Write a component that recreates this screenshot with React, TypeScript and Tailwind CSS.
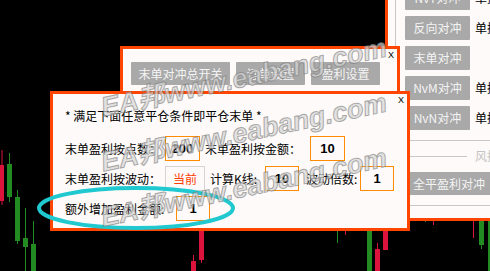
import type { ReactNode } from 'react'

type Candle = {
  x: number
  w: number
  top: number
  bottom: number
  wickTop?: number
  wickBottom?: number
  up: boolean
}

const UP = '#228b22'
const DOWN = '#dc143c'

// visible part of the price chart behind the EA windows
const CANDLES: Candle[] = [
  { x: 0, w: 4, top: 165, bottom: 201, wickTop: 150, wickBottom: 205, up: false },
  { x: 7, w: 5, top: 164, bottom: 197, wickTop: 153, wickBottom: 202, up: true },
  { x: 15, w: 5, top: 197, bottom: 241, wickTop: 190, wickBottom: 244, up: true },
  { x: 23, w: 5, top: 238, bottom: 247, wickTop: 208, wickBottom: 271, up: true },
  { x: 31, w: 5, top: 244, bottom: 271, wickTop: 221, wickBottom: 271, up: true },
  { x: 191, w: 5, top: 261, bottom: 271, wickTop: 255, wickBottom: 271, up: false },
  { x: 199, w: 5, top: 225, bottom: 260, wickBottom: 263, up: false },
  { x: 337, w: 0, top: 225, bottom: 243, up: true },
  { x: 345, w: 0, top: 225, bottom: 235, up: false },
  { x: 367, w: 5, top: 225, bottom: 271, up: true },
  { x: 375, w: 5, top: 249, bottom: 271, wickTop: 243, wickBottom: 271, up: false },
  { x: 383, w: 5, top: 225, bottom: 250, up: false },
  { x: 425, w: 0, top: 218, bottom: 222, up: true },
  { x: 433, w: 0, top: 218, bottom: 225, up: false },
  { x: 473, w: 0, top: 218, bottom: 238, up: false },
  { x: 479, w: 5, top: 218, bottom: 245, wickBottom: 249, up: true },
  { x: 488, w: 5, top: 218, bottom: 271, up: true },
]

function Chart() {
  return (
    <svg className="absolute left-0 top-0" width={490} height={271} viewBox="0 0 490 271">
      {CANDLES.map((c, i) => {
        const color = c.up ? UP : DOWN
        const mid = c.w ? c.x + c.w / 2 : c.x + 0.5
        return (
          <g key={i}>
            {(c.wickTop !== undefined || c.wickBottom !== undefined || c.w === 0) && (
              <line
                x1={mid}
                x2={mid}
                y1={c.wickTop ?? c.top}
                y2={c.wickBottom ?? c.bottom}
                stroke={color}
                strokeWidth={1}
              />
            )}
            {c.w > 0 && <rect x={c.x} y={c.top} width={c.w} height={c.bottom - c.top} fill={color} />}
          </g>
        )
      })}
    </svg>
  )
}

function GrayButton({ className, children }: { className: string; children: ReactNode }) {
  return (
    <div
      className={`flex shrink-0 items-center justify-center rounded-[1px] bg-[#a9a9a9] text-[12px] text-[#f4f4f4] ${className}`}
    >
      {children}
    </div>
  )
}

function CloseX() {
  return (
    <span className="absolute right-[3px] top-[1px] font-['Liberation_Sans',sans-serif] text-[9px] leading-[10px] text-black">
      X
    </span>
  )
}

function RightPanel() {
  const rows = [
    { label: 'NvT对冲', side: '单控' },
    { label: '反向对冲', side: '单控' },
    { label: '末单对冲', side: '' },
    { label: 'NvM对冲', side: '单控' },
    { label: 'NvN对冲', side: '单控' },
  ]
  return (
    <div className="absolute left-[385px] top-[-20px] flex h-[241px] w-[140px] border-[3px] border-[#ff4500] bg-[#fdfaf9]">
      <div className="w-[8px] shrink-0 border-r border-[#c8c8c8]" />
      <div className="flex flex-1 flex-col pl-[9px] pt-[3px]">
        <div className="flex flex-col gap-[6px]">
          {rows.map((r) => (
            <div key={r.label} className="flex h-[24px] items-center">
              <GrayButton className="h-full w-[65px]">{r.label}</GrayButton>
              <span className="ml-[5px] whitespace-nowrap text-black">{r.side}</span>
            </div>
          ))}
        </div>
        <div className="mt-[10px] border-t border-[#c8c8c8]" />
        <div className="mt-[8px] flex h-[14px] items-center">
          <div className="w-[62px] border-t border-[#c8c8c8]" />
          <span className="ml-[8px] whitespace-nowrap text-[#c4c4c4]">风控设置</span>
        </div>
        <GrayButton className="mt-[9px] h-[23px] w-[88px]">全平盈利对冲</GrayButton>
        <div className="mt-[10px] border-t border-[#c8c8c8]" />
      </div>
    </div>
  )
}

function SwitchDialog() {
  return (
    <div className="absolute left-[120px] top-[46px] h-[52px] w-[280px] border-[3px] border-[#ff4500] bg-[#fdfaf9]">
      <CloseX />
      <div className="flex gap-[6px] pl-[8px] pt-[13px]">
        <GrayButton className="h-[23px] w-[99px]">末单对冲总开关</GrayButton>
        <GrayButton className="h-[23px] w-[69px]">订单设置</GrayButton>
        <GrayButton className="h-[23px] w-[69px]">盈利设置</GrayButton>
      </div>
    </div>
  )
}

function ValueBox({ className, children }: { className: string; children: ReactNode }) {
  return (
    <div
      className={`flex h-full shrink-0 items-center justify-center border border-[#ff8c00] font-['Liberation_Sans',sans-serif] text-[13px] font-bold text-black ${className}`}
    >
      {children}
    </div>
  )
}

function ProfitDialog() {
  return (
    <div className="absolute left-[50px] top-[91px] h-[140px] w-[360px] border-[3px] border-[#ff4500] bg-[#fdfaf9] pl-[12px] pt-[14px] text-black">
      <CloseX />
      <p className="h-[16px] whitespace-nowrap leading-[16px]">* 满足下面任意平仓条件即平仓末单 *</p>

      <div className="mt-[12px] flex flex-col gap-[5px]">
        <div className="flex h-[25px] items-center">
          <span className="w-[100px] shrink-0 whitespace-nowrap">末单盈利按点数：</span>
          <ValueBox className="w-[35px]">200</ValueBox>
          <span className="w-[110px] shrink-0 whitespace-nowrap pl-[5px]">末单盈利按金额：</span>
          <ValueBox className="w-[35px]">10</ValueBox>
        </div>

        <div className="flex h-[25px] items-center">
          <span className="w-[100px] shrink-0 whitespace-nowrap">末单盈利按波动：</span>
          <div className="flex h-full w-[40px] shrink-0 items-center justify-center border border-[#d3d3d3] text-[#ff3c00]">
            当前
          </div>
          <span className="w-[60px] shrink-0 whitespace-nowrap pl-[5px]">计算K线:</span>
          <ValueBox className="w-[34px]">10</ValueBox>
          <span className="w-[61px] shrink-0 whitespace-nowrap pl-[7px]">波动倍数:</span>
          <ValueBox className="w-[34px]">1</ValueBox>
        </div>

        <div className="flex h-[25px] items-center">
          <span className="w-[111px] shrink-0 whitespace-nowrap">额外增加盈利金额:</span>
          <ValueBox className="w-[34px]">1</ValueBox>
        </div>
      </div>
    </div>
  )
}

function Highlight() {
  return (
    <svg className="pointer-events-none absolute left-0 top-0" width={490} height={271} viewBox="0 0 490 271">
      <ellipse cx={136} cy={208} rx={97} ry={20} fill="none" stroke="#20c8d0" strokeWidth={4} />
    </svg>
  )
}

const MARK_ROWS = ['top-[78px]', 'top-[133px]', 'top-[188px]']

function Watermarks() {
  return (
    <>
      {MARK_ROWS.map((row) => (
        <div key={row} className={`pointer-events-none absolute left-[244px] h-0 w-0 ${row}`}>
          <span className="absolute left-0 top-0 -translate-x-1/2 -translate-y-1/2 -rotate-12 whitespace-nowrap font-['Liberation_Sans','Noto_Sans_CJK_SC',sans-serif] text-[27px] font-bold italic leading-none text-[rgba(214,214,214,0.7)] [-webkit-text-stroke:1px_rgba(120,120,120,0.6)]">
            EA邦www.eabang.com
          </span>
        </div>
      ))}
    </>
  )
}

export default function App() {
  return (
    <div className="relative h-[271px] w-[490px] overflow-hidden bg-black font-['Noto_Sans_CJK_SC',sans-serif] text-[12px] leading-none">
      <Chart />
      <RightPanel />
      <SwitchDialog />
      <ProfitDialog />
      <Highlight />
      <Watermarks />
    </div>
  )
}
